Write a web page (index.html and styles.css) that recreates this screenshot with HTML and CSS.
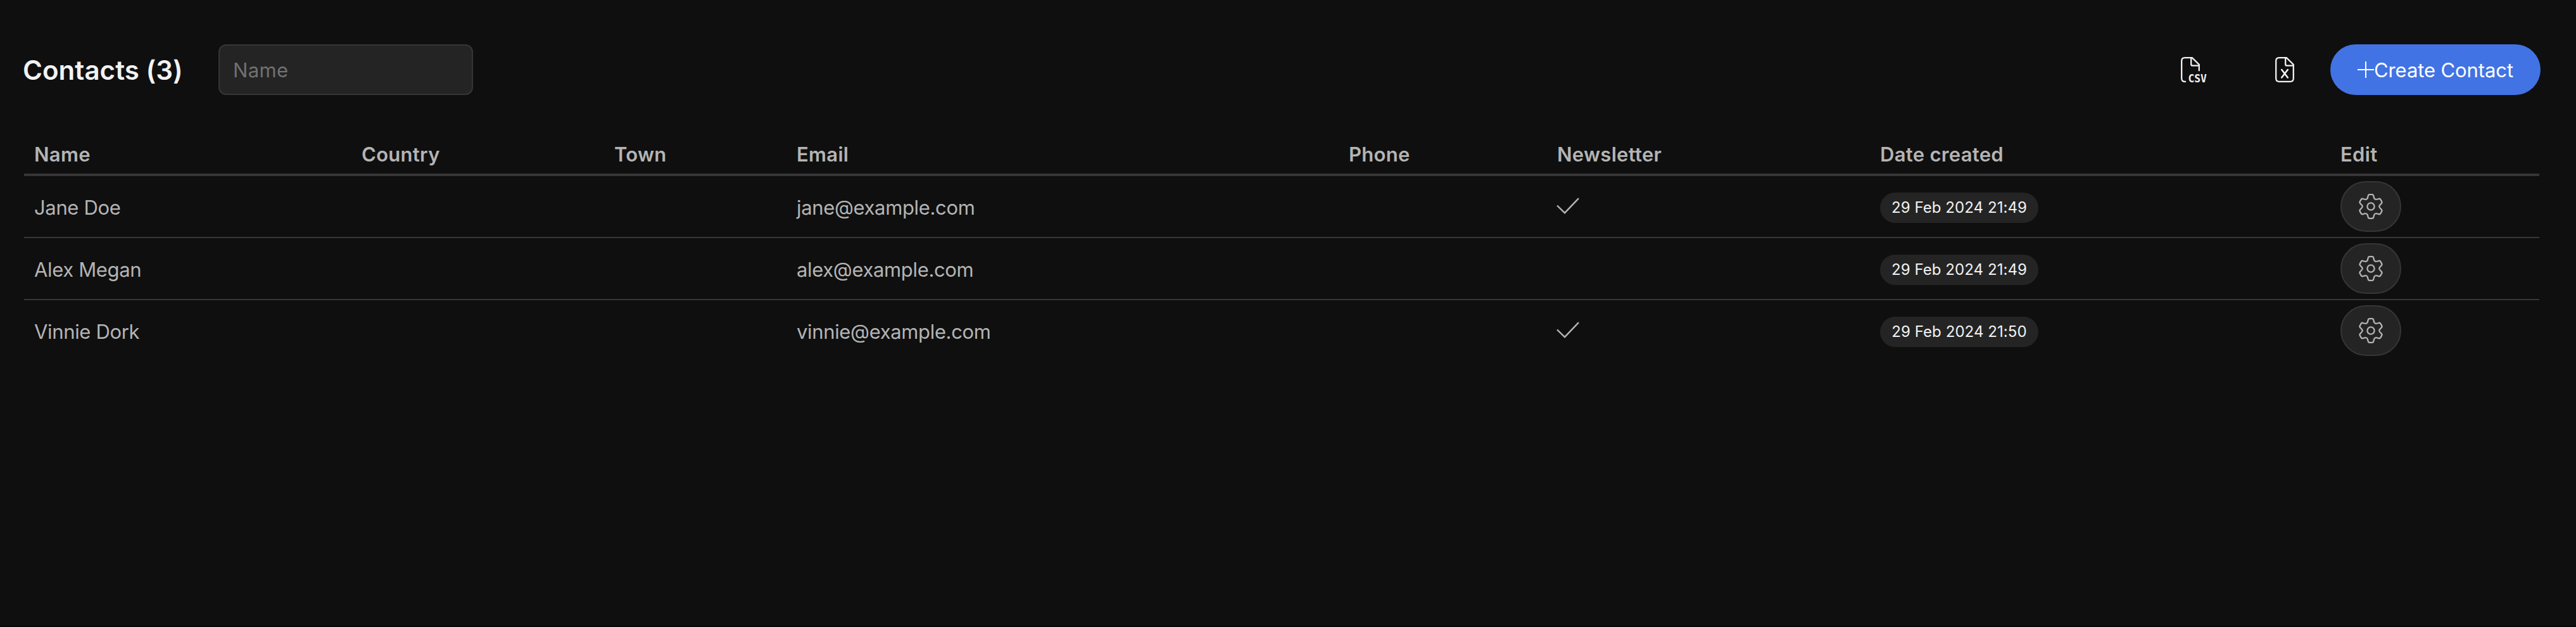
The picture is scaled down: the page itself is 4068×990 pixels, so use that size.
FILE: index.html
```
<!DOCTYPE html>
<html lang="en">
<head>
<meta charset="utf-8">
<title>Contacts</title>
<link rel="stylesheet" href="styles.css">
</head>
<body>
<svg class="defs" aria-hidden="true">
  <defs>
    <path id="tooth" d="M-6.65-11.5C-4.95-12.5-4.8-14-4.5-16L-4.2-17Q-3.8-18.8-2-18.8H2Q3.8-18.8 4.2-17L4.5-16C4.8-14 4.95-12.5 6.65-11.5"/>
    <symbol id="gear" viewBox="-20 -20 40 40">
      <use href="#tooth"/>
      <use href="#tooth" transform="rotate(60)"/>
      <use href="#tooth" transform="rotate(120)"/>
      <use href="#tooth" transform="rotate(180)"/>
      <use href="#tooth" transform="rotate(240)"/>
      <use href="#tooth" transform="rotate(300)"/>
      <circle r="5.6"/>
    </symbol>
    <symbol id="check" viewBox="0 0 36 26"><path d="M1 12.5L13 24.2 35 1.2"/></symbol>
  </defs>
</svg>
<main class="page">
  <header class="toolbar">
    <h1 class="title">Contacts (3)</h1>
    <input class="search" type="text" placeholder="Name">
    <div class="actions">
      <button class="icon-button" aria-label="Export CSV">
        <svg class="icon" viewBox="0 0 40 40">
          <path d="M8 38.9H6.3Q1.2 38.9 1.2 33.8V6.2Q1.2 1.1 6.3 1.1H17.8L28.8 12V22.3M16.2 1.1V11.4Q16.2 13.7 18.5 13.7H28.8"/>
          <text class="icon-label" x="11.4" y="39.7" textLength="29.4" lengthAdjust="spacingAndGlyphs">CSV</text>
        </svg>
      </button>
      <button class="icon-button" aria-label="Export Excel">
        <svg class="icon" viewBox="0 0 40 40">
          <path d="M22.8 1.1H11.3Q6.2 1.1 6.2 6.2V33.8Q6.2 38.9 11.3 38.9H28.7Q33.8 38.9 33.8 33.8V12L22.8 1.1ZM21.2 1.1V11.4Q21.2 13.7 23.5 13.7H33.8"/>
          <path class="cross" d="M15.2 20L24.8 32.5M24.8 20L15.2 32.5"/>
        </svg>
      </button>
      <button class="create">
        <svg class="plus" viewBox="0 0 26 26"><path d="M13 0V26M0 13H26"/></svg>
        <span>Create Contact</span>
      </button>
    </div>
  </header>
  <table class="contacts">
    <colgroup>
      <col class="c-name"><col class="c-country"><col class="c-town"><col class="c-email">
      <col class="c-phone"><col class="c-news"><col class="c-date"><col class="c-edit">
    </colgroup>
    <thead>
      <tr><th>Name</th><th>Country</th><th>Town</th><th>Email</th><th>Phone</th><th>Newsletter</th><th>Date created</th><th>Edit</th></tr>
    </thead>
    <tbody>
      <tr>
        <td>Jane Doe</td><td></td><td></td><td>jane@example.com</td><td></td>
        <td><svg class="check"><use href="#check"/></svg></td>
        <td><span class="pill">29 Feb 2024 21:49</span></td>
        <td><button class="edit" aria-label="Edit"><svg class="gear"><use href="#gear"/></svg></button></td>
      </tr>
      <tr>
        <td>Alex Megan</td><td></td><td></td><td>alex@example.com</td><td></td>
        <td></td>
        <td><span class="pill">29 Feb 2024 21:49</span></td>
        <td><button class="edit" aria-label="Edit"><svg class="gear"><use href="#gear"/></svg></button></td>
      </tr>
      <tr>
        <td>Vinnie Dork</td><td></td><td></td><td>vinnie@example.com</td><td></td>
        <td><svg class="check"><use href="#check"/></svg></td>
        <td><span class="pill">29 Feb 2024 21:50</span></td>
        <td><button class="edit" aria-label="Edit"><svg class="gear"><use href="#gear"/></svg></button></td>
      </tr>
    </tbody>
  </table>
</main>
</body>
</html>
```
FILE: styles.css
```
* { box-sizing: border-box; }

body {
  margin: 0;
  background: #0f0f0f;
  color: #b4b4b4;
  font-family: Inter, "Liberation Sans", sans-serif;
  font-size: 31px;
}

button, input { font: inherit; margin: 0; }
svg { display: block; fill: none; stroke: currentColor; }

.defs { position: absolute; width: 0; height: 0; }

.page {
  height: 990px;
  padding: 70px 56px 0 35px;
  border-bottom: 2px solid #0a0608;
}

.toolbar { display: flex; align-items: center; height: 80px; }

.title {
  width: 310px;
  margin: 0;
  padding: 1px 0 0 1px;
  color: #f2f2f2;
  font-size: 42px;
  font-weight: 600;
  line-height: 50px;
  letter-spacing: 0.05px;
  white-space: nowrap;
}

.search {
  width: 402px;
  height: 80px;
  padding: 0 20px 0 21px;
  border: 2px solid #363636;
  border-radius: 12px;
  background: #242424;
  color: #f2f2f2;
  letter-spacing: 0.36px;
}
.search::placeholder { color: #717171; opacity: 1; }

.actions { display: flex; align-items: center; margin-left: auto; }

.icon-button {
  padding: 20px 52px;
  border: 0;
  background: none;
  color: #f2f2f2;
}
.icon { width: 40px; height: 40px; stroke-width: 2.3; overflow: visible; }
.icon-label {
  fill: currentColor;
  stroke: none;
  font: bold 17px "DejaVu Sans Mono", monospace;
}
.cross { stroke-width: 2.6; stroke-linecap: round; }

.create {
  display: flex;
  align-items: center;
  justify-content: center;
  width: 332px;
  height: 80px;
  padding: 1px 0 0;
  border: 0;
  border-radius: 40px;
  background: #4173e4;
  color: #fff;
  letter-spacing: -0.09px;
}
.plus { width: 26px; height: 26px; margin-top: -1px; stroke-width: 2; }

.contacts {
  width: 3972px;
  margin: 62px 0 0 3px;
  border-collapse: separate;
  border-spacing: 0;
  table-layout: fixed;
}
.c-name { width: 517px; }
.c-country { width: 399px; }
.c-town { width: 288px; }
.c-email { width: 872px; }
.c-phone { width: 329px; }
.c-news { width: 510px; }
.c-date { width: 727px; }
.c-edit { width: 330px; }

th, td { padding: 0 16px; text-align: left; vertical-align: middle; }
th {
  height: 66px;
  border-bottom: 4px solid #363636;
  font-weight: 600;
  letter-spacing: 0.3px;
}
td {
  height: 98px;
  padding-top: 2px;
  border-bottom: 2px solid #363636;
  letter-spacing: -0.35px;
}
tbody tr:last-child td { height: 96px; border-bottom: 0; }

.check { width: 36px; height: 26px; margin: -4px 0 0 -1px; stroke-width: 2.4; }

.pill {
  display: block;
  width: 250px;
  height: 48px;
  margin-top: 2px;
  border-radius: 24px;
  background: #242424;
  color: #f2f2f2;
  font-size: 24px;
  line-height: 48px;
  letter-spacing: 0.06px;
  text-align: center;
}

.edit {
  display: flex;
  align-items: center;
  justify-content: center;
  width: 96px;
  height: 80px;
  margin-top: -2px;
  padding: 0;
  border: 2px solid #363636;
  border-radius: 40px;
  background: #242424;
  color: #b4b4b4;
}
.gear { width: 40px; height: 40px; stroke-width: 2.3; overflow: visible; }
```
